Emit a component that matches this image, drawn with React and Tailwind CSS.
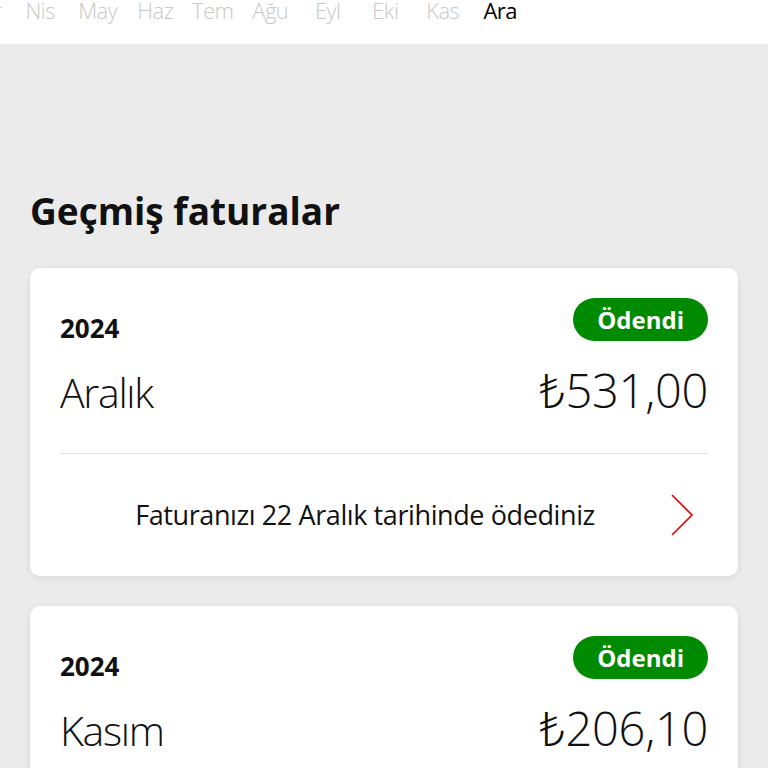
const months = ['Mar', 'Nis', 'May', 'Haz', 'Tem', 'Ağu', 'Eyl', 'Eki', 'Kas', 'Ara'];

const bills = [
  { year: '2024', month: 'Aralık', amount: '₺531,00', note: 'Faturanızı 22 Aralık tarihinde ödediniz' },
  { year: '2024', month: 'Kasım', amount: '₺206,10', note: 'Faturanızı 22 Kasım tarihinde ödediniz' },
];

function Chevron() {
  return (
    <svg width="24" height="42" viewBox="0 0 24 42" fill="none" className="shrink-0 mr-[14px]">
      <polyline points="2,1 22,21 2,41" stroke="#e60000" strokeWidth="1.6" />
    </svg>
  );
}

function BillCard({ bill }) {
  return (
    <div className="bg-white rounded-[10px] shadow-[0_2px_8px_rgba(0,0,0,0.08)] px-[30px] pt-[30px]">
      {/* Year + status */}
      <div className="flex items-end justify-between">
        <span className="text-[26px] leading-none font-bold text-[#111]">{bill.year}</span>
        <span className="h-[43px] px-[24px] rounded-full bg-[#008a00] text-white text-[24px] font-bold flex items-center">
          Ödendi
        </span>
      </div>

      {/* Month + amount */}
      <div className="flex items-baseline justify-between mt-[26px]">
        <span className="text-[41px] leading-none font-light tracking-[-1.3px] text-[#111]">{bill.month}</span>
        <span className="text-[47px] leading-none font-light tracking-[-0.3px] text-[#111]">{bill.amount}</span>
      </div>

      <div className="mt-[39px] h-px bg-[#e2e2e2]" />

      {/* Footer link */}
      <div className="flex items-center h-[122px]">
        <span className="flex-1 text-center text-[27px] tracking-[-0.4px] text-[#111]">{bill.note}</span>
        <Chevron />
      </div>
    </div>
  );
}

export default function App() {
  return (
    <div
      className="min-h-screen bg-[#ebebeb] overflow-hidden"
      style={{ fontFamily: '"Open Sans", "Noto Sans", sans-serif' }}
    >
      {/* Month axis */}
      <div className="h-[44px] bg-white overflow-hidden">
        <div className="flex -ml-[46px]">
          {months.map((m, i) => (
            <span
              key={m}
              className={`w-[57.5px] shrink-0 text-center text-[22px] leading-[20px] tracking-[-0.5px] ${
                i === months.length - 1 ? 'text-black' : 'text-[#c8c8c8] font-light'
              }`}
            >
              {m}
            </span>
          ))}
        </div>
      </div>

      <h1 className="mt-[148px] ml-[30px] text-[37px] leading-none font-bold text-[#111]">Geçmiş faturalar</h1>

      <div className="mt-[39px] mx-[30px] flex flex-col gap-[30px]">
        {bills.map((b) => (
          <BillCard key={b.month} bill={b} />
        ))}
      </div>
    </div>
  );
}
